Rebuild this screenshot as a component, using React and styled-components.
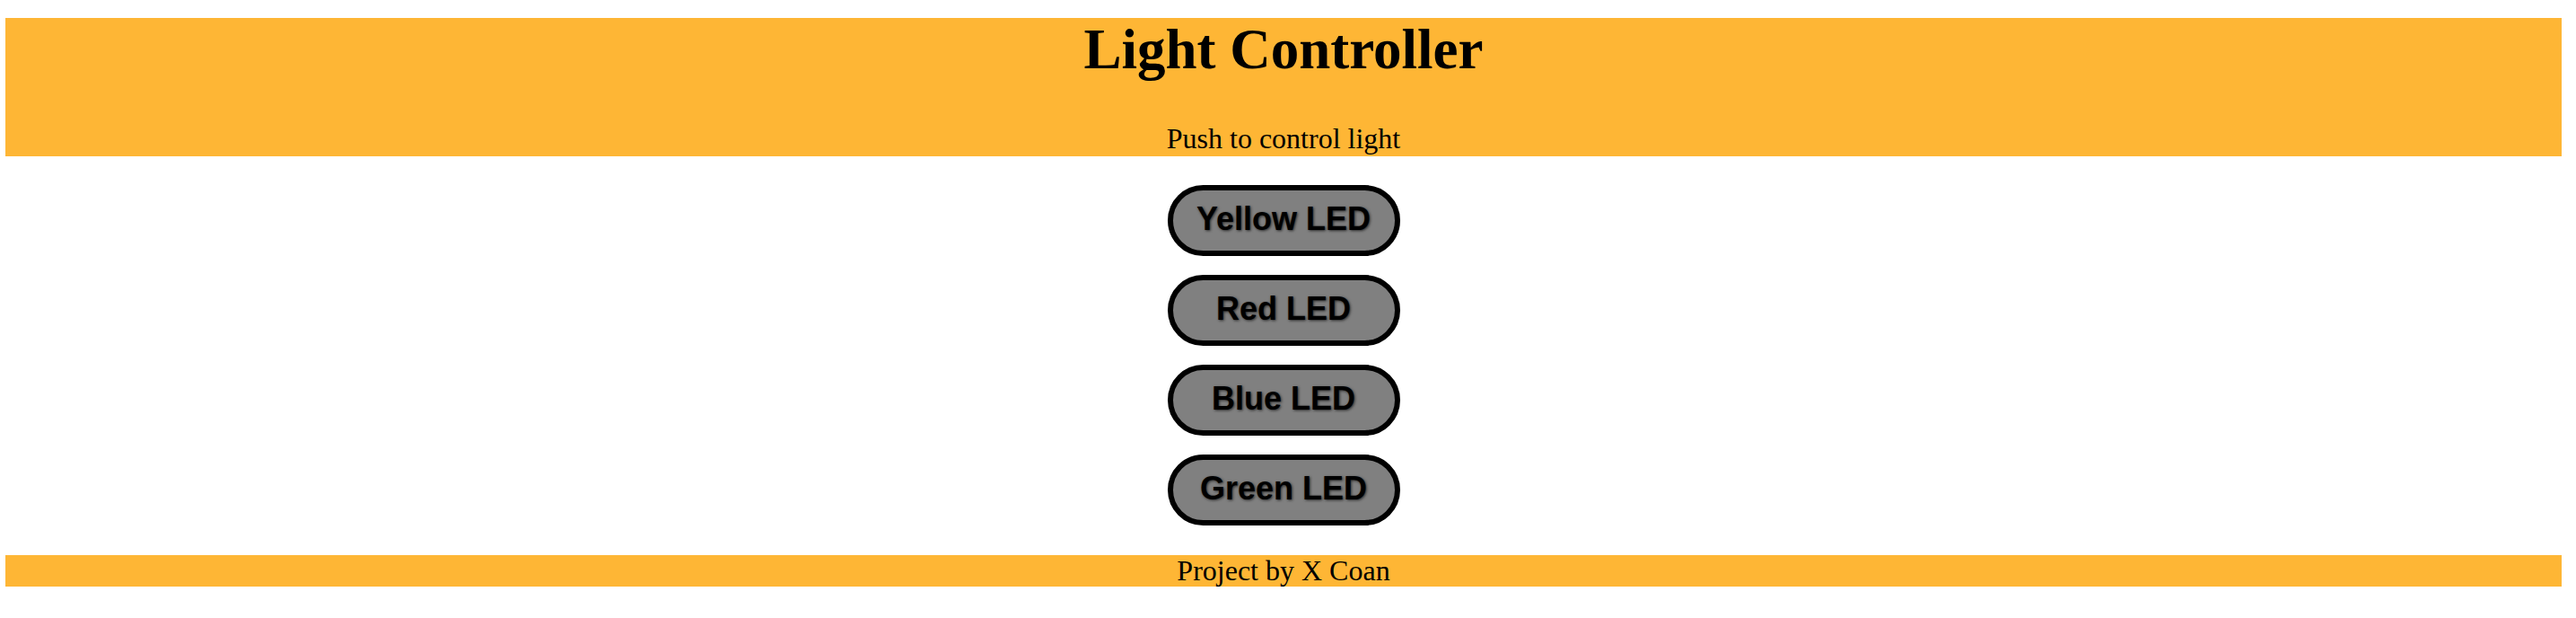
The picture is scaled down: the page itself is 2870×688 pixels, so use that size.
import React from 'react';
import styled, { createGlobalStyle } from 'styled-components';

const GlobalStyle = createGlobalStyle`
  body {
    margin: 20px 16px 0 6px;
    background: #ffffff;
    font-family: "Liberation Serif", "Times New Roman", serif;
    color: #000000;
  }
`;

const Header = styled.header`
  display: flex;
  flex-direction: column;
  align-items: center;
  background-color: #feb635;
  height: 154px;
  padding-bottom: 2px;
  box-sizing: border-box;
`;

const Title = styled.h1`
  margin: 0;
  font-size: 63px;
  line-height: 70px;
  font-weight: bold;
`;

const SubTitle = styled.p`
  margin: auto 0 0;
  font-size: 32px;
  line-height: 36px;
`;

const Controls = styled.div`
  display: flex;
  flex-direction: column;
  align-items: center;
  gap: 21px;
  padding: 32px 0 33px;
`;

const LedButton = styled.button`
  display: flex;
  align-items: center;
  justify-content: center;
  width: 259px;
  height: 79px;
  box-sizing: border-box;
  margin: 0;
  padding: 0 0 4px;
  background-color: #808080;
  border: 6px solid #000000;
  border-radius: 40px;
  font-family: "Liberation Sans", Arial, sans-serif;
  font-weight: bold;
  font-size: 36px;
  color: #000000;
  text-shadow: 1px 1px 3px #2a2a2a;
  cursor: pointer;
`;

const Footer = styled.footer`
  background-color: #feb635;
  height: 35px;
  text-align: center;
  font-size: 32px;
  line-height: 35px;
`;

const leds = ['Yellow LED', 'Red LED', 'Blue LED', 'Green LED'];

const App = () => {
  const toggle = (name) => {
    console.log('toggle', name);
  };

  return (
    <>
      <GlobalStyle />
      <Header>
        <Title>Light Controller</Title>
        <SubTitle>Push to control light</SubTitle>
      </Header>

      <Controls>
        {leds.map((name) => (
          <LedButton key={name} onClick={() => toggle(name)}>
            {name}
          </LedButton>
        ))}
      </Controls>

      <Footer>Project by X Coan</Footer>
    </>
  );
};

export default App;
